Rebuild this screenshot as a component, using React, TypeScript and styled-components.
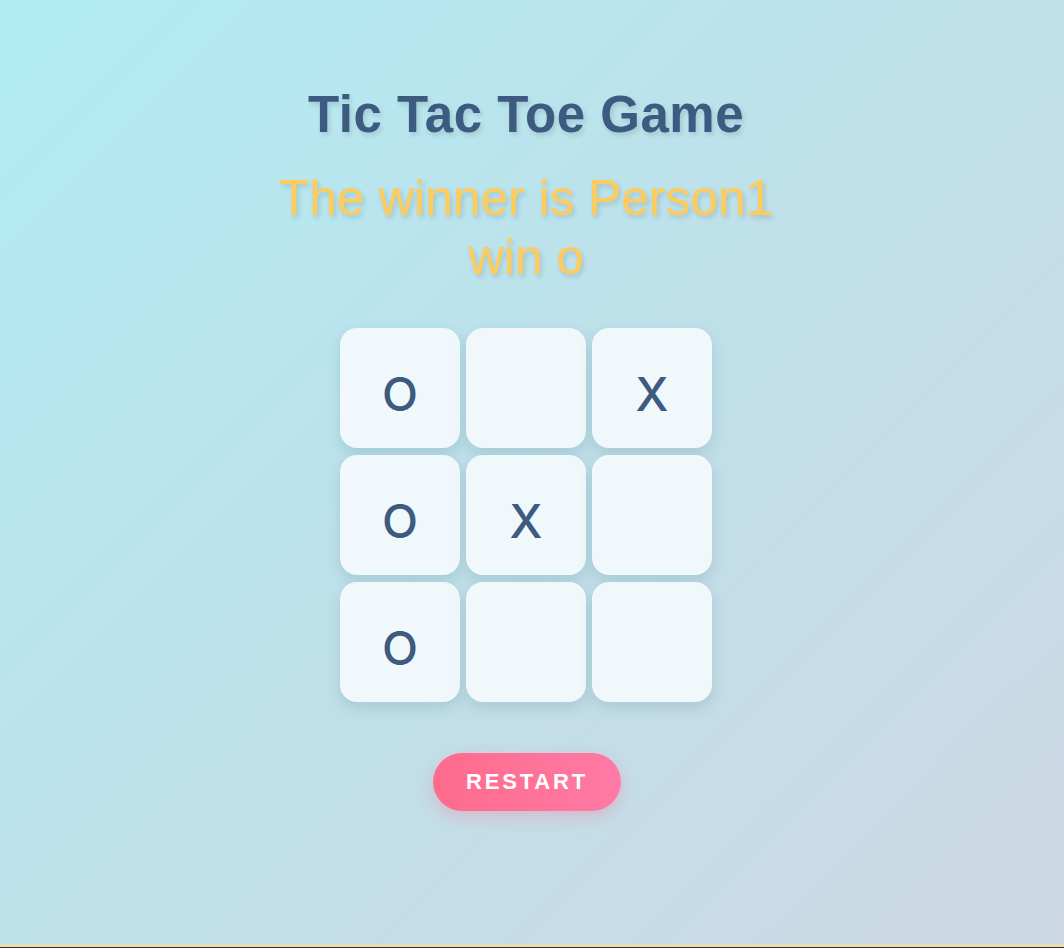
import React from "react";
import styled, { createGlobalStyle } from "styled-components";

const GlobalStyle = createGlobalStyle`
  html, body {
    margin: 0;
    padding: 0;
  }
  body {
    font-family: "Liberation Sans", Arial, sans-serif;
    background: #2f2f2f;
  }
`;

const Page = styled.div`
  min-height: 944px;
  background: linear-gradient(135deg, #b0ecf4 0%, #bfe0e9 50%, #cdd8e4 100%);
  display: flex;
  flex-direction: column;
  align-items: center;
  padding: 0 12px 0 0;
  box-sizing: border-box;
`;

const BottomStrip = styled.div`
  height: 3px;
  background: #e9dcb4;
`;

const Title = styled.h1`
  margin: 85px 0 0;
  font-size: 51px;
  line-height: 60px;
  font-weight: 700;
  letter-spacing: 0.5px;
  color: #3d5a80;
  text-shadow: 2px 3px 5px rgba(0, 0, 0, 0.12);
`;

const Status = styled.div`
  margin-top: 24px;
  font-size: 49.7px;
  line-height: 59px;
  color: #ffcc5c;
  text-align: center;
  text-shadow: 2px 3px 5px rgba(0, 0, 0, 0.14);
`;

const Board = styled.div`
  margin-top: 41px;
  display: grid;
  grid-template-columns: repeat(3, 120px);
  grid-auto-rows: 120px;
  column-gap: 6px;
  row-gap: 7px;
`;

const Cell = styled.button`
  border: none;
  border-radius: 17px;
  background: #f1f8fb;
  box-shadow: 0 6px 14px rgba(60, 110, 130, 0.18);
  font-family: Inter, "Noto Sans", sans-serif;
  font-weight: 500;
  font-size: 47px;
  color: #3d5a80;
  display: flex;
  align-items: center;
  justify-content: center;
  padding: 10px 0 0;
  cursor: pointer;
`;

const Restart = styled.button`
  margin: 51px 0 0 2px;
  width: 188px;
  height: 58px;
  border: none;
  border-radius: 29px;
  background: linear-gradient(90deg, #ff6b8b 0%, #ff7aa6 100%);
  box-shadow: 0 6px 16px rgba(255, 107, 139, 0.3);
  color: #ffffff;
  font-family: "Liberation Sans", Arial, sans-serif;
  font-weight: 700;
  font-size: 22px;
  letter-spacing: 2.8px;
  cursor: pointer;
`;

const board = ["O", "", "X", "O", "X", "", "O", "", ""];

export default function App() {
  return (
    <>
      <GlobalStyle />
      <Page>
        <Title>Tic Tac Toe Game</Title>
        <Status>
          The winner is Person1
          <br />
          win o
        </Status>
        <Board>
          {board.map((v, i) => (
            <Cell key={i}>{v}</Cell>
          ))}
        </Board>
        <Restart>RESTART</Restart>
      </Page>
      <BottomStrip />
    </>
  );
}
